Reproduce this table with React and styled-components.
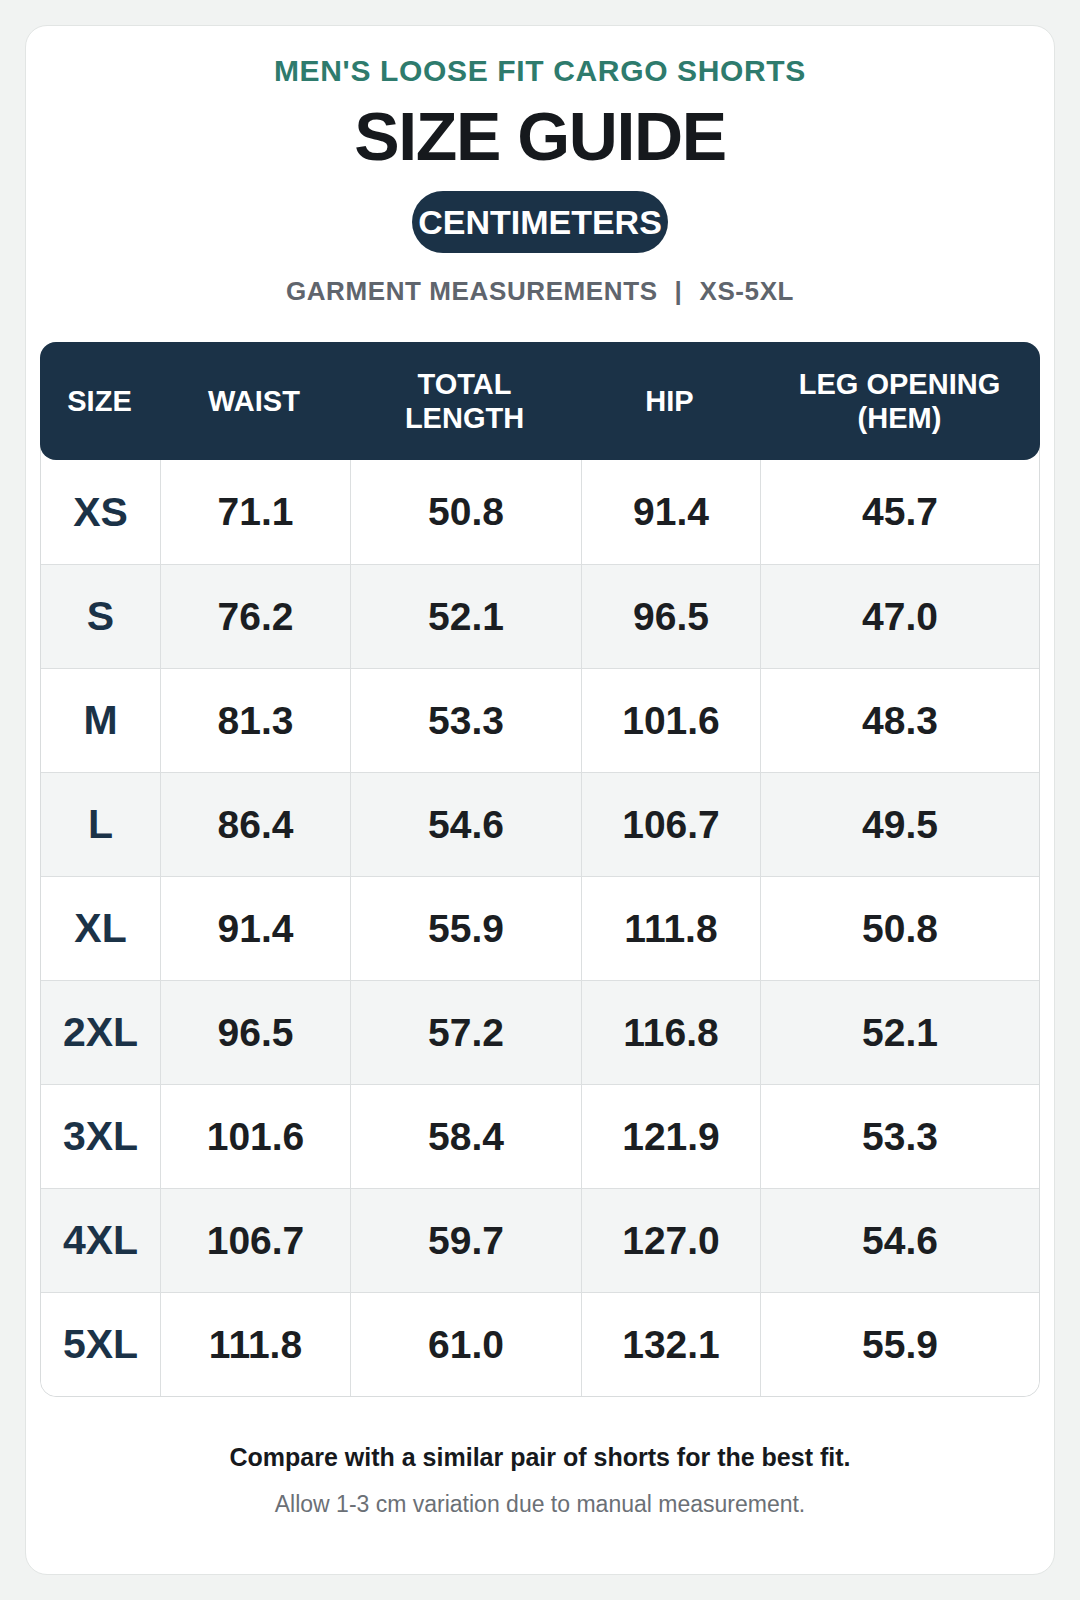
import React from 'react';
import styled, { createGlobalStyle } from 'styled-components';

const GlobalStyle = createGlobalStyle`
  html, body {
    margin: 0;
    padding: 0;
    background: #f1f3f2;
  }
  body {
    font-family: 'Liberation Sans', Arial, Helvetica, sans-serif;
  }
`;

const Page = styled.div`
  padding: 25px;
  width: 1080px;
  box-sizing: border-box;
`;

const Card = styled.div`
  background: #ffffff;
  border: 1px solid #e2e5e4;
  border-radius: 22px;
  height: 1550px;
  box-sizing: border-box;
  padding: 28px 14px 0 14px;
  display: flex;
  flex-direction: column;
  align-items: center;
`;

const Eyebrow = styled.div`
  font-size: 30px;
  line-height: 34px;
  font-weight: 700;
  letter-spacing: 0.65px;
  color: #2e7b6d;
`;

const Title = styled.h1`
  margin: 10px 0 0;
  font-size: 68px;
  line-height: 76px;
  font-weight: 700;
  letter-spacing: -1.4px;
  color: #16191d;
`;

const UnitPill = styled.div`
  margin-top: 17px;
  height: 62px;
  padding: 0 6px;
  border-radius: 31px;
  background: #1b3247;
  color: #ffffff;
  font-size: 34px;
  font-weight: 700;
  display: flex;
  align-items: center;
  justify-content: center;
`;

const Meta = styled.div`
  margin-top: 23px;
  font-size: 26px;
  line-height: 30px;
  font-weight: 700;
  letter-spacing: 0.6px;
  color: #5f656d;
  display: flex;
  align-items: center;
  gap: 17px;
`;

const TableWrap = styled.div`
  margin-top: 36px;
  align-self: stretch;
  border: 1px solid #d9dcdd;
  border-radius: 16px;
`;

const columns = '119px 190px 231px 179px 1fr';

const HeaderRow = styled.div`
  display: grid;
  grid-template-columns: ${columns};
  height: 118px;
  margin: -1px -1px 0;
  background: #1b3247;
  border-radius: 16px;
`;

const HeadCell = styled.div`
  display: flex;
  align-items: center;
  justify-content: center;
  text-align: center;
  color: #ffffff;
  font-size: 29px;
  line-height: 34px;
  font-weight: 700;
`;

const Row = styled.div`
  display: grid;
  grid-template-columns: ${columns};
  height: 104px;
  background: ${p => (p.$shaded ? '#f3f5f5' : '#ffffff')};
  border-top: ${p => (p.$first ? 'none' : '1px solid #dcdfe0')};
  box-sizing: border-box;
  border-radius: ${p => (p.$last ? '0 0 16px 16px' : '0')};
`;

const Cell = styled.div`
  display: flex;
  align-items: center;
  justify-content: center;
  border-left: ${p => (p.$first ? 'none' : '1px solid #dcdfe0')};
  font-size: ${p => (p.$size ? '41px' : '39px')};
  font-weight: 700;
  color: ${p => (p.$size ? '#1b3247' : '#1b1e22')};
`;

const Note = styled.p`
  margin: 46px 0 0;
  font-size: 25px;
  line-height: 29px;
  font-weight: 700;
  color: #16191d;
`;

const SubNote = styled.p`
  margin: 19px 0 0;
  font-size: 23px;
  line-height: 27px;
  color: #6b7076;
`;

const headers = ['SIZE', 'WAIST', 'TOTAL\nLENGTH', 'HIP', 'LEG OPENING\n(HEM)'];

const rows = [
  ['XS', '71.1', '50.8', '91.4', '45.7'],
  ['S', '76.2', '52.1', '96.5', '47.0'],
  ['M', '81.3', '53.3', '101.6', '48.3'],
  ['L', '86.4', '54.6', '106.7', '49.5'],
  ['XL', '91.4', '55.9', '111.8', '50.8'],
  ['2XL', '96.5', '57.2', '116.8', '52.1'],
  ['3XL', '101.6', '58.4', '121.9', '53.3'],
  ['4XL', '106.7', '59.7', '127.0', '54.6'],
  ['5XL', '111.8', '61.0', '132.1', '55.9'],
];

export default function App() {
  return (
    <Page>
      <GlobalStyle />
      <Card>
        <Eyebrow>MEN'S LOOSE FIT CARGO SHORTS</Eyebrow>
        <Title>SIZE GUIDE</Title>
        <UnitPill>CENTIMETERS</UnitPill>
        <Meta>
          <span>GARMENT MEASUREMENTS</span>
          <span>|</span>
          <span>XS-5XL</span>
        </Meta>

        <TableWrap>
          <HeaderRow>
            {headers.map(h => (
              <HeadCell key={h}>
                <span>
                  {h.split('\n').map((line, i) => (
                    <React.Fragment key={line}>
                      {i > 0 && <br />}
                      {line}
                    </React.Fragment>
                  ))}
                </span>
              </HeadCell>
            ))}
          </HeaderRow>
          {rows.map((r, i) => (
            <Row key={r[0]} $shaded={i % 2 === 1} $first={i === 0} $last={i === rows.length - 1}>
              {r.map((v, j) => (
                <Cell key={j} $first={j === 0} $size={j === 0}>
                  {v}
                </Cell>
              ))}
            </Row>
          ))}
        </TableWrap>

        <Note>Compare with a similar pair of shorts for the best fit.</Note>
        <SubNote>Allow 1-3 cm variation due to manual measurement.</SubNote>
      </Card>
    </Page>
  );
}
